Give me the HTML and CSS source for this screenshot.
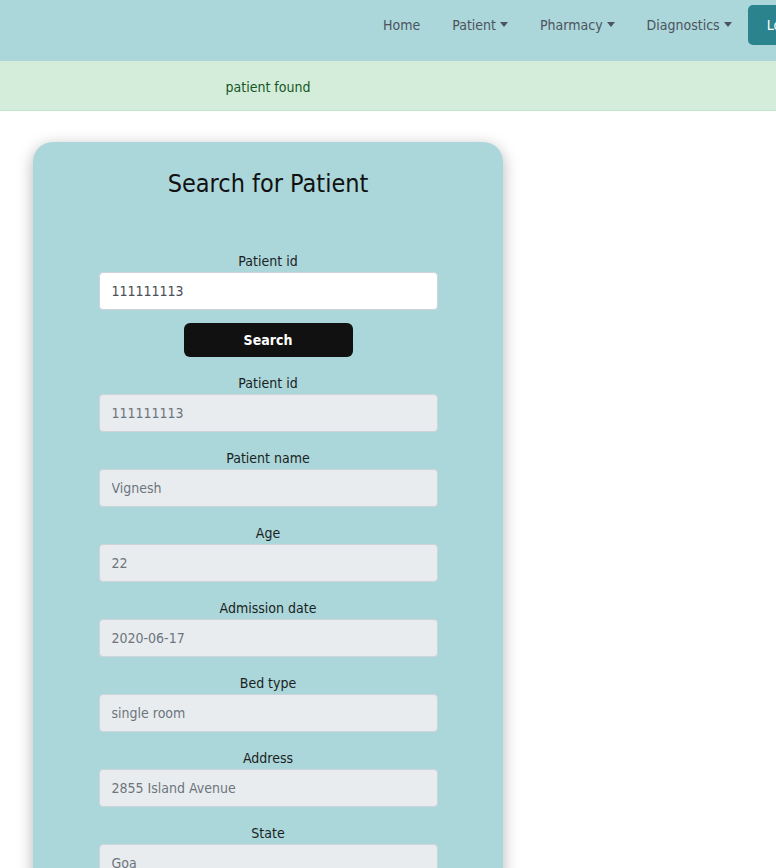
FILE: index.html
```html
<!DOCTYPE html>
<html lang="en">
<head>
<meta charset="utf-8">
<title>Search for Patient</title>
<link rel="stylesheet" href="styles.css">
</head>
<body>
<nav class="navbar">
  <ul class="nav-list">
    <li><a class="nav-link" href="#">Home</a></li>
    <li><a class="nav-link dropdown" href="#">Patient</a></li>
    <li><a class="nav-link dropdown" href="#">Pharmacy</a></li>
    <li><a class="nav-link dropdown" href="#">Diagnostics</a></li>
    <li><button class="logout">Logout</button></li>
  </ul>
</nav>
<div class="alert">
  <div class="alert-inner">patient found</div>
</div>
<main class="main">
  <section class="card">
    <h1 class="title">Search for Patient</h1>
    <form class="form">
      <label class="label">Patient id</label>
      <input class="input" type="text" value="111111113">
      <button class="search-btn" type="button">Search</button>

      <label class="label">Patient id</label>
      <input class="input" type="text" value="111111113" disabled>

      <label class="label">Patient name</label>
      <input class="input" type="text" value="Vignesh" disabled>

      <label class="label">Age</label>
      <input class="input" type="text" value="22" disabled>

      <label class="label">Admission date</label>
      <input class="input" type="text" value="2020-06-17" disabled>

      <label class="label">Bed type</label>
      <input class="input" type="text" value="single room" disabled>

      <label class="label">Address</label>
      <input class="input" type="text" value="2855 Island Avenue" disabled>

      <label class="label">State</label>
      <input class="input" type="text" value="Goa" disabled>

      <label class="label">City</label>
      <input class="input" type="text" value="Panaji" disabled>
    </form>
  </section>
</main>
</body>
</html>
```
FILE: styles.css
```css
* { box-sizing: border-box; }
html, body {
  margin: 0;
  padding: 0;
  overflow-x: hidden;
}
body {
  font-family: "DejaVu Sans Condensed", "DejaVu Sans", sans-serif;
  font-stretch: condensed;
  font-size: 14px;
  color: #212529;
  background: #fff;
  width: 776px;
}
.navbar {
  background: #abd6da;
  height: 61px;
  padding-top: 5px;
  overflow: hidden;
}
.nav-list {
  list-style: none;
  margin: 0;
  padding: 0 0 0 367px;
  display: flex;
  align-items: center;
  height: 40px;
  width: 900px;
}
.nav-link {
  display: block;
  padding: 0 16px;
  color: #4b545c;
  text-decoration: none;
  font-size: 14px;
  line-height: 42px;
}
.dropdown::after {
  content: "";
  display: inline-block;
  margin-left: 4px;
  vertical-align: 3px;
  border-top: 5px solid #4b545c;
  border-left: 4px solid transparent;
  border-right: 4px solid transparent;
}
.logout {
  font-family: inherit;
  font-stretch: condensed;
  font-size: 14px;
  height: 40px;
  padding: 0 19px;
  border: 0;
  border-radius: 5px;
  background: #2b848d;
  color: #fff;
}
.alert {
  background: #d4edda;
  border-bottom: 1px solid #c3e6cb;
  height: 50px;
  display: flex;
  align-items: center;
}
.alert-inner {
  width: 470px;
  margin-left: 33px;
  text-align: center;
  color: #155724;
  padding-top: 3px;
}
.main {
  padding: 31px 0 0 33px;
}
.card {
  width: 470px;
  background: #abd6da;
  border-radius: 20px;
  box-shadow: 0 4px 16px rgba(0, 0, 0, 0.3);
  padding: 24px 0 40px;
}
.title {
  margin: 0 0 46px;
  text-align: center;
  font-weight: normal;
  font-size: 25px;
  line-height: 36px;
  color: #111;
}
.form {
  width: 339px;
  margin: 0 auto;
  display: flex;
  flex-direction: column;
  align-items: center;
}
.label {
  display: block;
  width: 100%;
  text-align: center;
  line-height: 26px;
  height: 24px;
  color: #1a1f22;
}
.input {
  width: 339px;
  height: 38px;
  margin-bottom: 13px;
  padding: 0 12px;
  border: 1px solid #ced4da;
  border-radius: 4px;
  background: #fff;
  font-family: inherit;
  font-stretch: condensed;
  font-size: 14px;
  color: #495057;
}
.input:disabled {
  background: #e9ecef;
  color: #6c757d;
  -webkit-text-fill-color: #6c757d;
  opacity: 1;
}
.search-btn {
  width: 169px;
  height: 34px;
  margin-bottom: 13px;
  border: 0;
  border-radius: 6px;
  background: #111;
  color: #fff;
  font-family: inherit;
  font-stretch: condensed;
  font-weight: bold;
  font-size: 14px;
}
```
